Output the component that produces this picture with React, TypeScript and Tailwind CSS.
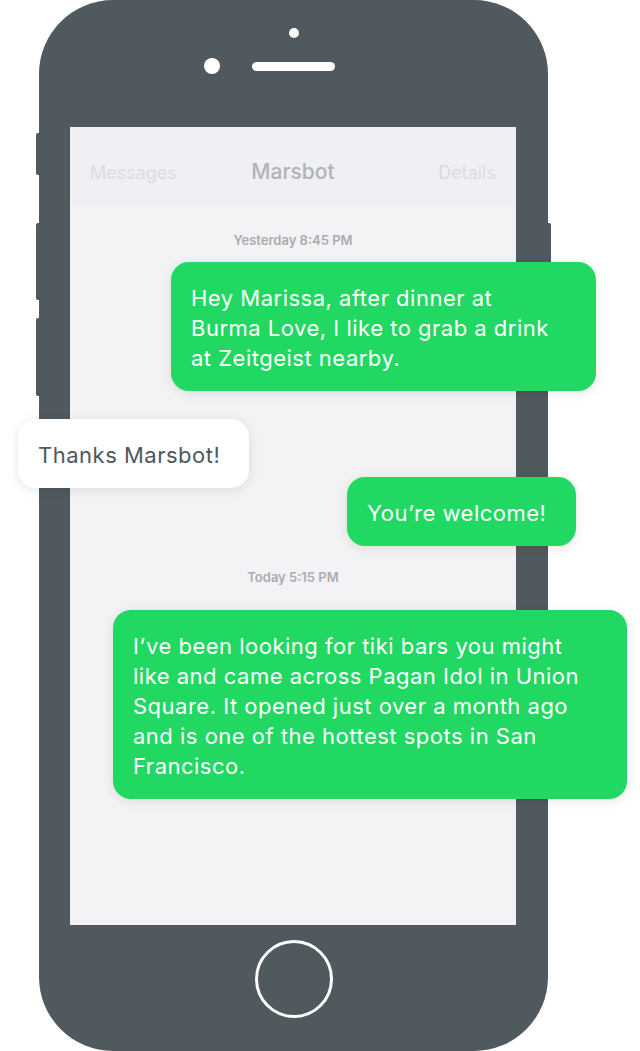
const bubble =
  "relative shrink-0 rounded-[18px] px-5 pt-[21px] pb-[18px] text-[22px] leading-[30px] tracking-[0.5px] whitespace-nowrap shadow-[0_2px_12px_rgba(0,0,0,0.1)]";

export default function App() {
  return (
    <div className="relative w-[640px] h-[1051px] overflow-hidden bg-white font-[Inter,sans-serif]">
      <div className="relative ml-[39px] w-[509px] h-[1051px] rounded-[74px] bg-[#4f595e] flex flex-col items-center">
        {/* side buttons */}
        <div className="absolute left-[-3px] top-[133px] w-[6px] h-[42px] rounded-l-[2px] bg-[#4f595e]" />
        <div className="absolute left-[-3px] top-[223px] w-[6px] h-[77px] rounded-l-[2px] bg-[#4f595e]" />
        <div className="absolute left-[-3px] top-[318px] w-[6px] h-[78px] rounded-l-[2px] bg-[#4f595e]" />
        <div className="absolute right-[-3px] top-[223px] w-[6px] h-[77px] rounded-r-[2px] bg-[#4f595e]" />

        <div className="h-[127px] w-full flex flex-col">
          <div className="mt-[28px] self-center ml-[1px] w-[10px] h-[10px] rounded-full bg-white" />
          <div className="mt-[20px] ml-[165px] flex items-center gap-[32px]">
            <div className="w-[16px] h-[16px] rounded-full bg-white" />
            <div className="w-[83px] h-[9px] rounded-full bg-white" />
          </div>
        </div>

        <div className="self-start ml-[31px] w-[446px] h-[798px] bg-[#f3f3f6] flex flex-col items-start">
          <div className="w-full h-[80px] shrink-0 bg-[#efeff4] grid grid-cols-3 items-center px-5 pt-[10px]">
            <span className="text-[18px] text-[#dcdce1]">Messages</span>
            <span className="text-center text-[21px] font-medium text-[#b1b3b8]">Marsbot</span>
            <span className="text-right text-[18px] text-[#dcdce1]">Details</span>
          </div>

          <p className="self-stretch mt-[25px] text-center text-[13px] leading-[16px] font-semibold text-[#ababb0]">
            Yesterday 8:45 PM
          </p>

          <div className={`${bubble} mt-[14px] ml-[101px] w-[425px] bg-[#21d863] text-white`}>
            Hey Marissa, after dinner at
            <br />
            Burma Love, I like to grab a drink
            <br />
            at Zeitgeist nearby.
          </div>

          <div className={`${bubble} mt-[28px] ml-[-52px] w-[231px] bg-white text-[#4e585c]`}>
            Thanks Marsbot!
          </div>

          <div className={`${bubble} mt-[-11px] ml-[277px] w-[229px] bg-[#21d863] text-white`}>
            You’re welcome!
          </div>

          <p className="self-stretch mt-[23px] text-center text-[13px] leading-[16px] font-semibold text-[#ababb0]">
            Today 5:15 PM
          </p>

          <div className={`${bubble} mt-[25px] ml-[43px] w-[514px] bg-[#21d863] text-white`}>
            I’ve been looking for tiki bars you might
            <br />
            like and came across Pagan Idol in Union
            <br />
            Square. It opened just over a month ago
            <br />
            and is one of the hottest spots in San
            <br />
            Francisco.
          </div>
        </div>

        <div className="mt-[15px] w-[78px] h-[78px] rounded-full border-[3px] border-white" />
      </div>
    </div>
  );
}
